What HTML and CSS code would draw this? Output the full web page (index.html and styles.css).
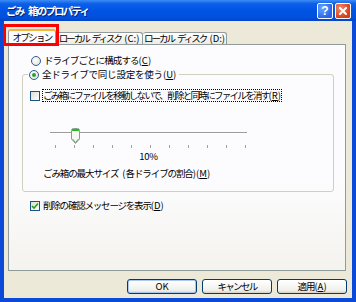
FILE: index.html
```html
<!DOCTYPE html>
<html lang="ja">
<head>
  <meta charset="UTF-8" />
  <title>ごみ 箱のプロパティ</title>
  <link rel="stylesheet" href="styles.css">
</head>
<body>

<div class="window">
  <div class="titlebar">
    <span class="title">ごみ 箱のプロパティ</span>
    <div class="caption-buttons">
      <span class="cap-btn help">?</span>
      <span class="cap-btn close">
        <svg width="8" height="8" viewBox="0 0 8 8"><path d="M1 1 L7 7 M7 1 L1 7" stroke="#fff" stroke-width="2" stroke-linecap="square"/></svg>
      </span>
    </div>
  </div>

  <div class="client">
    <div class="tabs">
      <div class="tab active">オプション</div>
      <div class="tab tab-c">ローカル ディスク <span class="key">(C:)</span></div>
      <div class="tab tab-d">ローカル ディスク <span class="key">(D:)</span></div>
      <div class="highlight"></div>
    </div>

    <div class="panel">
      <label class="row radio-row"><span class="radio"></span>ドライブごとに構成する<span class="key">(<u>C</u>)</span></label>

      <fieldset class="group">
        <legend class="row"><span class="radio checked"></span>全ドライブで同じ設定を使う<span class="key">(<u>U</u>)</span></legend>

        <label class="row check-row first"><span class="check"></span><span class="focus">ごみ箱にファイルを移動しないで、削除と同時にファイルを消す<span class="key">(<u>R</u>)</span></span></label>

        <div class="slider">
          <div class="track"></div>
          <svg class="thumb" width="9" height="16" viewBox="0 0 9 16">
            <path d="M0.5 2.5 Q0.5 0.5 2.5 0.5 L6.5 0.5 Q8.5 0.5 8.5 2.5 L8.5 11 L4.5 15.5 L0.5 11 Z" fill="#f7f7f4" stroke="#8c9a94"/>
            <path d="M1 1.5 L8 1.5 M1 2.5 L8 2.5" stroke="#21c021"/>
            <path d="M1.5 11 L4.5 14.5 L7.5 11" fill="none" stroke="#3cc03c"/>
          </svg>
        </div>
        <div class="ticks">
          <span></span><span></span><span></span><span></span><span></span><span></span>
          <span></span><span></span><span></span><span></span><span></span>
        </div>
        <div class="percent">10%</div>
        <div class="size-label">ごみ箱の最大サイズ <span class="key">(</span>各ドライブの割合<span class="key">)(<u>M</u>)</span></div>
      </fieldset>

      <label class="row check-row confirm"><span class="check checked">
        <svg width="8" height="8" viewBox="0 0 8 8"><path d="M1 4 L3 6 L7 1.5" fill="none" stroke="#21a121" stroke-width="1.6"/></svg>
      </span>削除の確認メッセージを表示<span class="key">(<u>D</u>)</span></label>
    </div>

    <div class="buttons">
      <button class="btn default">OK</button>
      <button class="btn">キャンセル</button>
      <button class="btn apply">適用<span class="key">(<u>A</u>)</span></button>
    </div>
  </div>
</div>

</body>
</html>
```

FILE: styles.css
```css
body {
  margin: 0;
  font-family: "Noto Sans CJK JP", "Noto Sans", sans-serif;
  font-size: 9.5px;
  letter-spacing: -1.2px;
  word-spacing: 3px;
  color: #000;
}

.key {
  letter-spacing: 0;
  word-spacing: 0;
}

.window {
  width: 356px;
  height: 302px;
  display: flex;
  flex-direction: column;
  background: #0b4ad8;
  box-sizing: border-box;
}

.titlebar {
  height: 21px;
  display: flex;
  align-items: center;
  justify-content: space-between;
  background: linear-gradient(#3d8cf6 0%, #0b5fe8 18%, #0054e3 50%, #0050dc 85%, #0044c8 100%);
  padding-left: 6px;
  flex-shrink: 0;
}

.title {
  color: #fff;
  font-weight: bold;
  font-size: 10.5px;
  letter-spacing: -1.8px;
  word-spacing: 4px;
  text-shadow: 1px 1px 0 #0a1f6e;
}

.caption-buttons {
  display: flex;
  gap: 2px;
  margin-right: 5px;
}

.cap-btn {
  width: 14px;
  height: 14px;
  border: 1px solid #fff;
  border-radius: 2px;
  display: flex;
  align-items: center;
  justify-content: center;
  color: #fff;
  font-family: "Liberation Sans", sans-serif;
  font-weight: bold;
  font-size: 12px;
  letter-spacing: 0;
}

.help {
  background: radial-gradient(circle at 30% 30%, #6aa3ff, #2a66e8 70%);
}

.close {
  background: radial-gradient(circle at 30% 30%, #f08a6a, #d8401c 70%);
}

.client {
  flex: 1;
  margin: 0 4px 4px 4px;
  background: #ece9d8;
  padding: 8px 6px 0 4px;
  display: flex;
  flex-direction: column;
}

.tabs {
  position: relative;
  display: flex;
  align-items: flex-end;
  height: 15px;
  z-index: 1;
}

.tab {
  flex-shrink: 0;
  box-sizing: border-box;
  height: 12px;
  line-height: 11px;
  text-align: center;
  border: 1px solid #919b9c;
  border-bottom: none;
  border-left: none;
  border-radius: 3px 3px 0 0;
  background: linear-gradient(#ffffff, #ecebe5);
  white-space: nowrap;
  letter-spacing: -2px;
  word-spacing: 3px;
}

.tab-c {
  width: 87px;
}

.tab-d {
  width: 84px;
}

.tab.active {
  width: 48px;
  border-left: 1px solid #919b9c;
  height: 16px;
  line-height: 13px;
  margin-bottom: -1px;
  background: #fcfcfe;
  border-top: 2px solid #f5b43c;
  letter-spacing: -1.7px;
}

.highlight {
  position: absolute;
  left: -5px;
  top: -5px;
  width: 56px;
  height: 22px;
  box-sizing: border-box;
  border: 3px solid #f00;
}

.panel {
  height: 227px;
  box-sizing: border-box;
  border: 1px solid #919b9c;
  background: linear-gradient(#fcfcfe 60%, #f4f3ee);
  padding: 9px 11px 0 13px;
}

.row {
  display: flex;
  align-items: center;
  height: 13px;
  line-height: 13px;
  white-space: nowrap;
}

.radio-row {
  margin-left: 9px;
  letter-spacing: -0.9px;
}

.radio {
  width: 8px;
  height: 8px;
  border: 1px solid #2f5d97;
  border-radius: 50%;
  background: radial-gradient(circle at 40% 40%, #fff, #dcdcd5);
  margin-right: 3px;
  display: flex;
  align-items: center;
  justify-content: center;
  flex-shrink: 0;
}

.radio.checked::after {
  content: "";
  width: 4px;
  height: 4px;
  border-radius: 50%;
  background: #2aa52a;
}

.group {
  margin: 1px 0 0 0;
  padding: 0 0 11px 7px;
  border: 1px solid #d0d0bf;
  border-radius: 3px;
}

.group legend {
  padding: 0 3px 0 1px;
  margin-left: -2px;
  letter-spacing: -0.2px;
}

.check {
  width: 8px;
  height: 8px;
  border: 1px solid #1c5180;
  background: linear-gradient(135deg, #dcdcd7, #fff);
  margin-right: 3px;
  display: flex;
  align-items: center;
  justify-content: center;
  flex-shrink: 0;
}

.check-row.first {
  margin-top: 8px;
}

.focus {
  outline: 1px dotted #000;
  outline-offset: 0;
  line-height: 11px;
  letter-spacing: -1.7px;
}

.slider {
  position: relative;
  margin: 24px 0 0 20px;
  width: 197px;
  height: 19px;
}

.track {
  position: absolute;
  left: 0;
  right: 0;
  top: 6px;
  height: 1px;
  background: #9d9c99;
  border-bottom: 1px solid #fff;
}

.thumb {
  position: absolute;
  left: 21px;
  top: 2px;
}

.ticks {
  display: flex;
  justify-content: space-between;
  margin-left: 25px;
  width: 191px;
  height: 4px;
}

.ticks span {
  width: 1px;
  height: 3px;
  background: #a0a0a0;
}

.percent {
  margin: 1px 0 0 20px;
  width: 197px;
  text-align: center;
  line-height: 13px;
  letter-spacing: -0.3px;
}

.size-label {
  margin: 4px 0 0 13px;
  line-height: 13px;
  white-space: nowrap;
  letter-spacing: -1.1px;
}

.confirm {
  margin: 7px 0 0 8px;
  letter-spacing: -1.2px;
}

.buttons {
  display: flex;
  justify-content: flex-end;
  gap: 5px;
  margin: 8px -1px 0 0;
}

.btn {
  width: 70px;
  height: 15px;
  padding: 0;
  border: 1px solid #003c74;
  border-radius: 3px;
  background: linear-gradient(#ffffff, #f0f0ea 80%, #d6d0c5);
  font-family: inherit;
  font-size: 9.5px;
  letter-spacing: -1.7px;
  line-height: 13px;
  color: #000;
}

.btn.apply {
  letter-spacing: -1px;
}

.btn.default {
  box-shadow: inset 0 0 0 1px #a9c8f5;
  letter-spacing: 0;
}
```
